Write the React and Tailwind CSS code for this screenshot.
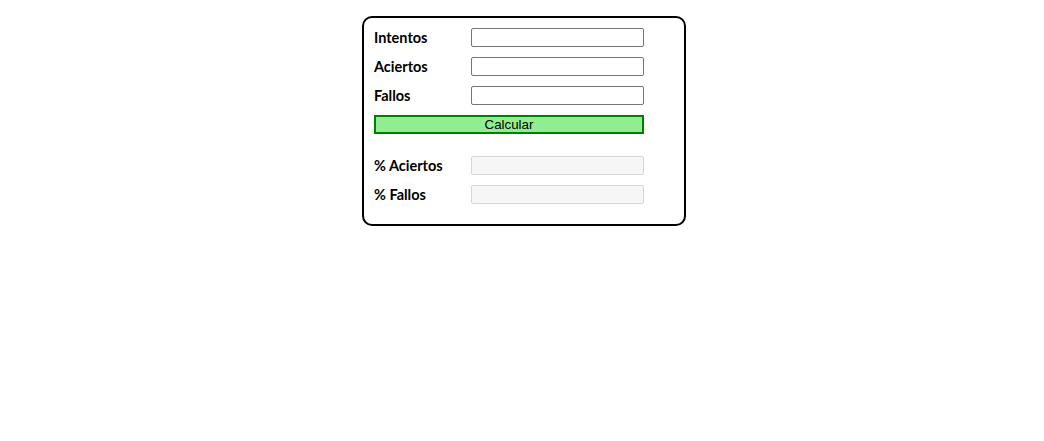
import React from "react";

function Row({ label, disabled }) {
  return (
    <div className="flex items-center h-[19px] mb-[10px]">
      <label className="w-[97px] text-[14.5px] font-bold text-black" style={{ fontFamily: "Lato, 'Open Sans', sans-serif" }}>
        {label}
      </label>
      <input
        type="text"
        disabled={disabled}
        className={
          disabled
            ? "w-[173px] h-[19px] border border-[#d6d6d6] bg-[#f6f6f6] rounded-[2px]"
            : "w-[173px] h-[19px] border border-[#767676] bg-white rounded-[2px]"
        }
      />
    </div>
  );
}

export default function App() {
  return (
    <div className="w-full min-h-[441px] bg-white pt-4">
      <div className="ml-[362px] w-[324px] border-2 border-black rounded-[10px] p-[10px]">
        <Row label="Intentos" />
        <Row label="Aciertos" />
        <Row label="Fallos" />
        <button
          className="w-[270px] h-[19px] border-2 border-[#008000] bg-[#90ee90] text-[13.3px] leading-none text-black flex items-center justify-center mb-[22px]"
          style={{ fontFamily: "'Liberation Sans', Arial, sans-serif" }}
        >
          Calcular
        </button>
        <Row label="% Aciertos" disabled />
        <Row label="% Fallos" disabled />
      </div>
    </div>
  );
}
